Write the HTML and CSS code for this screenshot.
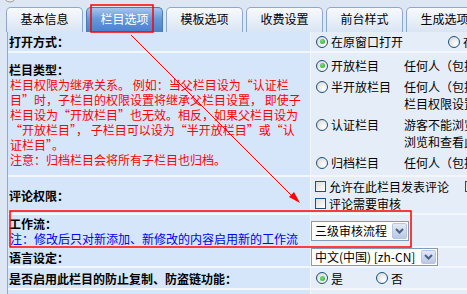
FILE: index.html
```html
<!DOCTYPE html>
<html lang="zh-CN">
<head>
  <meta charset="UTF-8" />
  <title>栏目选项</title>
  <link rel="stylesheet" href="styles.css">
</head>
<body>
  <div class="tabs">
    <span class="tab">基本信息</span>
    <span class="tab active">栏目选项</span>
    <span class="tab">模板选项</span>
    <span class="tab">收费设置</span>
    <span class="tab">前台样式</span>
    <span class="tab">生成选项</span>
  </div>

  <div class="panel">
    <div class="row row-open">
      <div class="label"><b>打开方式：</b></div>
      <div class="field">
        <div class="line">
          <span class="opt opt-wide"><span class="radio on"></span>在原窗口打开</span>
          <span class="opt"><span class="radio"></span>在新窗口打开</span>
        </div>
      </div>
    </div>

    <div class="row row-type">
      <div class="label">
        <b>栏目类型：</b>
        <span class="red">栏目权限为继承关系。 例如：当父栏目设为“认证栏<br>目”时，子栏目的权限设置将继承父栏目设置， 即使子<br>栏目设为“开放栏目”也无效。相反，如果父栏目设为<br>“开放栏目”， 子栏目可以设为“半开放栏目”或“认<br>证栏目”。<br>注意：归档栏目会将所有子栏目也归档。</span>
      </div>
      <div class="field types">
        <div class="type">
          <span class="opt"><span class="radio on"></span>开放栏目</span>
          <span class="desc">任何人（包括游客）可以浏览和查看此栏目下的信息。</span>
        </div>
        <div class="type">
          <span class="opt"><span class="radio"></span>半开放栏目</span>
          <span class="desc">任何人（包括游客）都可以浏览此栏目下的信息，查看内容时需要<br>栏目权限设置中指定的会员组才能查看。</span>
        </div>
        <div class="type">
          <span class="opt"><span class="radio"></span>认证栏目</span>
          <span class="desc">游客不能浏览和查看，只有栏目权限设置中指定的会员组才能<br>浏览和查看此栏目下的信息。</span>
        </div>
        <div class="type">
          <span class="opt"><span class="radio"></span>归档栏目</span>
          <span class="desc">任何人（包括游客）都可以浏览和查看此栏目下的归档信息。</span>
        </div>
      </div>
    </div>

    <div class="row row-comment">
      <div class="label"><b>评论权限：</b></div>
      <div class="field">
        <div class="line">
          <span class="opt opt-check"><span class="check"></span>允许在此栏目发表评论</span>
          <span class="opt"><span class="check"></span>允许游客发表评论</span>
        </div>
        <div class="line">
          <span class="opt"><span class="check"></span>评论需要审核</span>
        </div>
      </div>
    </div>

    <div class="row row-flow">
      <div class="label">
        <b>工作流：</b>
        <span class="blue">注：修改后只对新添加、新修改的内容启用新的工作流</span>
      </div>
      <div class="field">
        <div class="select">
          <span class="select-text">三级审核流程</span>
          <span class="select-btn"><svg width="9" height="6" viewBox="0 0 9 6"><path d="M1 1 L4.5 4.5 L8 1" fill="none" stroke="#4d6185" stroke-width="2"/></svg></span>
        </div>
      </div>
    </div>

    <div class="row row-lang">
      <div class="label"><b>语言设定：</b></div>
      <div class="field">
        <div class="select select-lang">
          <span class="select-text">中文(中国) [zh-CN]</span>
          <span class="select-btn"><svg width="9" height="6" viewBox="0 0 9 6"><path d="M1 1 L4.5 4.5 L8 1" fill="none" stroke="#4d6185" stroke-width="2"/></svg></span>
        </div>
      </div>
    </div>

    <div class="row row-copy">
      <div class="label"><b>是否启用此栏目的防止复制、防盗链功能：</b></div>
      <div class="field">
        <div class="line">
          <span class="opt opt-yes"><span class="radio on"></span>是</span>
          <span class="opt"><span class="radio"></span>否</span>
        </div>
      </div>
    </div>

    <div class="row row-copy">
      <div class="label"><b>是否在此栏目的信息列表中显示子栏目信息：</b></div>
      <div class="field"></div>
    </div>
  </div>

  <!-- red annotations drawn over the screenshot -->
  <svg class="marks" width="467" height="294" viewBox="0 0 467 294">
    <circle cx="10" cy="-4" r="6" fill="#eeeeee" stroke="#9a9a9a"/>
    <rect x="91" y="5" width="62" height="27" fill="none" stroke="#ff0000" stroke-width="1.5"/>
    <line x1="131" y1="35" x2="294" y2="198" stroke="#ff0000" stroke-width="1"/>
    <polygon points="300,203 289,197 294,192" fill="#ff0000"/>
    <rect x="10" y="211" width="401" height="36" fill="none" stroke="#ff0000" stroke-width="1.5"/>
  </svg>
</body>
</html>
```

FILE: styles.css
```css
body {
  margin: 0;
  width: 467px;
  height: 294px;
  overflow: hidden;
  position: relative;
  background: #dce7f3;
  font-family: "Noto Sans CJK SC", "Liberation Sans", sans-serif;
  font-size: 12px;
  line-height: 15px;
  color: #000;
}

.tabs {
  display: flex;
  gap: 3px;
  padding: 7px 0 0 6px;
  height: 25px;
}

.tab {
  flex: none;
  width: 75px;
  height: 25px;
  border: 1px solid #8ea8cb;
  border-bottom: none;
  border-radius: 5px 5px 0 0;
  background: linear-gradient(#f8fafd, #d9e5f3);
  text-align: center;
  line-height: 21px;
  box-sizing: border-box;
  width: 77px;
}

.tab.active {
  background: linear-gradient(#a6c5ee, #6598dc 45%, #4a80cc);
  border-color: #4b7bbd;
  color: #fff;
}

.panel {
  width: 800px;
  margin-left: 7px;
  border-left: 1px solid #8ea8cb;
  background: #f3f7fc;
  display: flex;
  flex-direction: column;
  gap: 2px;
}

.row {
  display: grid;
  grid-template-columns: 302px 1fr;
  column-gap: 1px;
}

.row-open { height: 19px; }
.row-type { height: 122px; }
.row-comment { height: 36px; }
.row-flow { height: 31px; }
.row-lang { height: 18px; }
.row-copy { height: 20px; }

.label {
  background: #d5e6fa;
  padding: 0 2px 0 1px;
  display: flex;
  flex-direction: column;
  justify-content: center;
  white-space: nowrap;
}

.label .red {
  color: #ff0000;
  padding-left: 1px;
}

.label .blue {
  color: #0000ff;
  padding-left: 1px;
}

.field {
  background: #e5eef8;
  display: flex;
  flex-direction: column;
  justify-content: center;
  align-items: flex-start;
  white-space: nowrap;
}

.line {
  display: flex;
  align-items: center;
  height: 17px;
}

.opt {
  display: inline-flex;
  align-items: center;
}

.opt-wide { margin-right: 40px; }
.opt-check { margin-right: 12px; }
.opt-yes { margin-right: 28px; }

.radio {
  width: 12px;
  height: 12px;
  margin: 0 3px 0 5px;
  border: 1px solid #1c5180;
  border-radius: 50%;
  box-sizing: border-box;
  background: radial-gradient(circle at 70% 70%, #ffffff, #d4d4cd);
  display: inline-flex;
  align-items: center;
  justify-content: center;
}

.radio.on::after {
  content: "";
  width: 5px;
  height: 5px;
  border-radius: 50%;
  background: radial-gradient(circle at 40% 40%, #7fe07f, #21a121);
}

.check {
  width: 11px;
  height: 11px;
  margin: 0 3px 0 4px;
  border: 1px solid #1c5180;
  box-sizing: border-box;
  background: linear-gradient(135deg, #dcdcd7, #ffffff);
}

.types {
  justify-content: flex-start;
  padding: 2px 0;
}

.type {
  display: grid;
  grid-template-columns: 93px auto;
  padding: 2px 0;
  line-height: 17px;
}

.type .opt {
  align-self: start;
  height: 17px;
}

.select {
  display: flex;
  width: 98px;
  height: 20px;
  border: 1px solid #7f9db9;
  background: #fff;
  box-sizing: border-box;
}

.select-lang {
  width: 127px;
  height: 18px;
}

.select-text {
  flex: 1;
  padding-left: 3px;
  line-height: 18px;
  font-size: 12px;
}

.select-lang .select-text {
  line-height: 16px;
}

.select-btn {
  width: 15px;
  margin: 1px;
  border: 1px solid #b4c5e6;
  border-radius: 2px;
  box-sizing: border-box;
  background: linear-gradient(#e2e9f6, #b9c8e4);
  display: flex;
  align-items: center;
  justify-content: center;
}

.marks {
  position: absolute;
  top: 0;
  left: 0;
  pointer-events: none;
  overflow: visible;
}
```
